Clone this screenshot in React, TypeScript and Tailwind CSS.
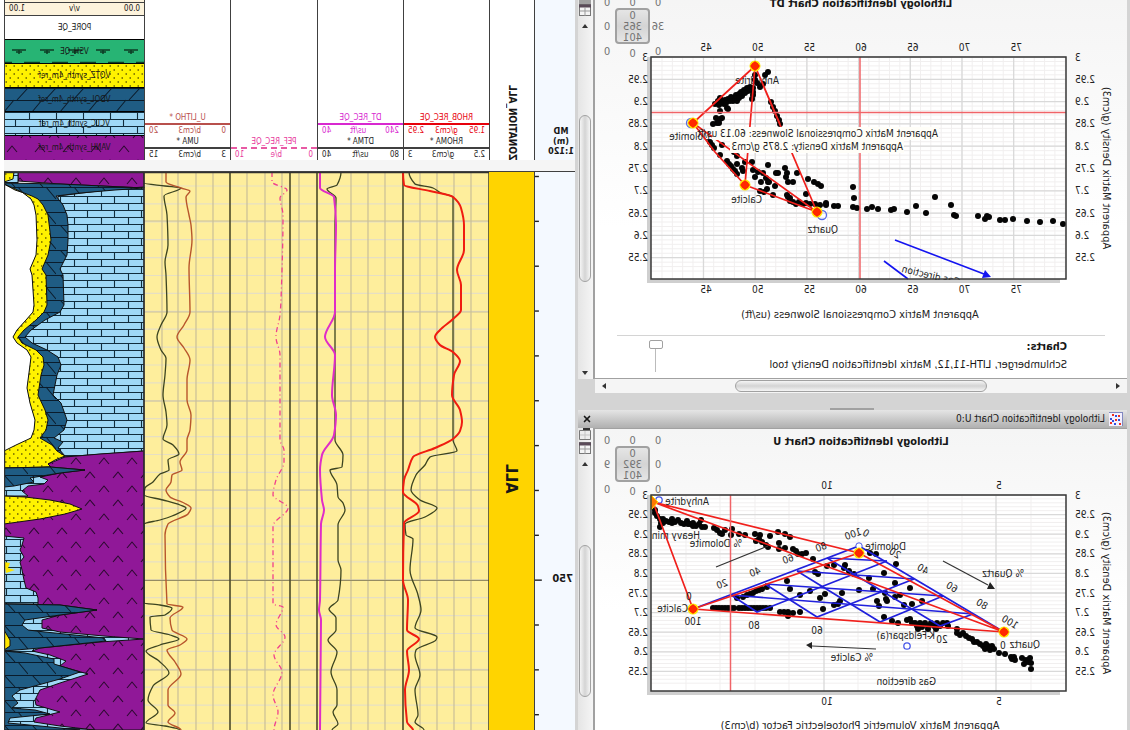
import React from 'react';
import { X } from 'lucide-react';

type Point = [number, number];

interface Scale {
  name: string;
  left: string;
  unit: string;
  right: string;
  text: string;
  line: string;
}

interface Track {
  id: string;
  scales: Scale[];
}

const tracks: Track[] = [
  {
    id: 'rho',
    scales: [
      { name: 'RHOB_REC_QE', left: '1.95', unit: 'g/cm3', right: '2.95', text: 'text-red-600', line: 'border-t-2 border-red-600' },
      { name: 'RHOMA *', left: '2.5', unit: 'g/cm3', right: '3', text: 'text-neutral-800', line: 'border-t-2 border-neutral-700' },
    ],
  },
  {
    id: 'dt',
    scales: [
      { name: 'DT_REC_QE', left: '240', unit: 'us/ft', right: '40', text: 'text-[#d828d0]', line: 'border-t-2 border-[#d828d0]' },
      { name: 'DTMA *', left: '80', unit: 'us/ft', right: '40', text: 'text-neutral-800', line: 'border-t-2 border-neutral-700' },
    ],
  },
  {
    id: 'pef',
    scales: [
      { name: 'PEF_REC_QE', left: '0', unit: 'b/e', right: '10', text: 'text-[#e83a9c]', line: 'border-t-2 border-dashed border-[#e85aa4]' },
    ],
  },
  {
    id: 'u',
    scales: [
      { name: 'U_LITHO *', left: '0', unit: 'b/cm3', right: '20', text: 'text-[#b8504c]', line: 'border-t-2 border-[#b8504c]' },
      { name: 'UMA *', left: '3', unit: 'b/cm3', right: '15', text: 'text-neutral-800', line: 'border-t-2 border-neutral-700' },
    ],
  },
];

const lithologies = [
  { name: 'PORE_QE', fill: '#ffffff' },
  { name: 'VSH_QE', fill: 'url(#shale)' },
  { name: 'VQTZ_synth_4m_ref', fill: 'url(#sand)' },
  { name: 'VDOL_synth_4m_ref', fill: 'url(#dolomite)' },
  { name: 'VCLC_synth_4m_ref', fill: 'url(#limestone)' },
  { name: 'VANH_synth_4m_ref', fill: 'url(#anhydrite)' },
];

const curves = [
  { color: '#3c4420', width: 1.3, points: '144,183 165,186 181,188 164,196 167,215 168,245 165,262 166,275 167,312 161,325 157,337 161,350 166,358 165,375 163,395 166,412 167,425 163,439 173,445 179,454 168,460 169,470 160,474 153,482 145,488 144,495 163,500 180,505 186,508 172,516 160,520 144,524 144,603 160,605 172,608 165,615 150,617 151,630 170,635 179,639 160,645 146,651 159,661 169,673 153,686 148,700 158,712 146,723 165,726 180,730' },
  { color: '#b8562c', width: 1.4, points: '166,172 166,182 181,188 190,191 186,197 189,215 191,225 192,240 189,268 190,312 184,325 177,337 184,348 190,360 187,380 187,400 191,415 190,430 187,440 187,450 180,462 182,470 172,475 171,482 166,490 170,497 184,503 191,508 188,514 168,524 165,535 167,604 183,607 170,618 172,630 187,639 180,645 167,650 175,662 181,674 168,690 168,705 175,713 168,722 181,730' },
  { color: '#f0408c', width: 1.3, dash: '5 3 1 3', points: '272,172 272,182 287,190 280,198 283,215 281,300 280,315 276,337 280,355 280,440 284,450 284,462 276,480 273,495 288,508 273,526 273,604 283,607 276,625 285,637 274,655 282,672 273,695 278,712 274,730' },
  { color: '#3c4420', width: 1.3, points: '341,172 337,185 327,189 336,198 335,225 335,440 343,455 342,467 330,470 337,485 338,497 343,503 345,510 338,525 338,560 341,570 338,600 329,609 336,618 336,630 328,640 337,652 331,672 337,690 337,705 333,712 338,724 332,730' },
  { color: '#e02cc8', width: 2, points: '320,172 320,188 334,197 336,225 335,270 335,312 325,337 335,355 332,395 336,415 334,435 322,455 320,470 322,500 324,510 321,524 320,600 319,610 321,620 320,730' },
  { color: '#3c4420', width: 1.3, points: '409,172 415,184 433,188 441,193 453,197 453,210 453,430 453,440 457,451 430,457 425,465 416,475 411,490 420,500 437,508 425,517 405,524 406,535 413,539 410,570 418,595 421,610 415,628 437,637 436,640 416,650 415,655 420,675 415,690 418,715 415,722 424,730' },
  { color: '#f01c10', width: 2, points: '403,172 404,185 430,191 453,197 461,208 464,225 464,250 457,270 461,285 461,310 453,319 440,330 435,337 440,345 453,352 460,361 454,375 452,395 460,410 462,422 460,431 453,439 435,448 413,457 408,470 404,480 403,492 418,506 419,511 404,523 403,580 408,600 407,630 419,639 407,651 409,670 405,690 407,722 413,730' },
];

const minorLines = Array.from({ length: 31 }, (_, i) => 186 + i * 17.9);
const majorLines = [221, 312, 401, 490, 580, 670];
const depthTicks = Array.from({ length: 13 }, (_, i) => i);

const toPoints = (s: string): Point[] =>
  s.split(' ').map((p) => p.split(',').map(Number) as Point);

// Cubic through every sample; handles lean on depth so the curve never runs backwards.
const smoothPath = (pts: Point[]) => {
  const slope = (i: number) => {
    const [x0, y0] = pts[Math.max(i - 1, 0)];
    const [x1, y1] = pts[i];
    const [x2, y2] = pts[Math.min(i + 1, pts.length - 1)];
    if ((x1 - x0) * (x2 - x1) <= 0) return 0;
    const a = (x1 - x0) / (y1 - y0);
    const b = (x2 - x1) / (y2 - y1);
    return (2 * a * b) / (a + b);
  };
  return pts.slice(1).reduce((d, [x, y], i) => {
    const [px, py] = pts[i];
    const h = (y - py) / 3;
    return `${d}C${px + slope(i) * h} ${py + h} ${x - slope(i + 1) * h} ${y - h} ${x} ${y}`;
  }, `M${pts[0][0]} ${pts[0][1]}`);
};

const slownessDots = toPoints(
  '768,72 765,75 755,75 755,80 763,84 760,87 753,88 750,87 747,88 744,90 741,92 739,94 736,95 734,98 731,97 728,99 725,100 722,101 718,101 715,104 720,98 733,101 737,101 742,96 748,91 719,105 724,104 730,101 745,93 739,98 753,92 753,95 752,99 757,83 720,111 727,108 726,103 728,109 716,118 717,123 713,124 720,119 719,123 722,118 771,102 773,107 775,111 777,116 779,120 780,124 ' +
  '710,142 712,145 714,148 720,155 727,161 729,164 731,166 733,169 735,171 737,174 722,145 734,152 737,156 737,164 743,171 742,168 745,162 752,162 753,170 755,177 758,172 763,173 766,178 768,182 761,182 769,182 767,189 773,195 775,186 768,165 776,173 778,173 785,168 787,173 786,177 788,182 793,182 797,173 808,179 814,182 818,184 821,186 806,194 790,198 787,195 ' +
  '760,191 764,192 788,197 790,201 793,202 796,204 799,202 803,204 806,203 810,204 815,204 818,206 820,205 826,203 826,205 834,206 838,206 853,187 854,198 853,207 857,208 867,209 872,207 878,209 891,210 894,209 907,212 916,206 926,213 935,197 951,205 954,215 956,216 978,216 985,219 987,216 989,217 1000,220 1005,220 1013,219 1027,221 1040,222 1053,221 1063,224'
);

const photoDots = toPoints(
  '655,509 655,512 657,515 660,518 661,522 660,526 663,518 663,522 666,520 669,521 672,518 672,522 675,521 678,519 681,522 684,523 687,520 690,523 693,522 696,525 699,523 702,526 701,519 705,526 693,525 688,523 714,527 717,529 720,532 722,533 725,529 731,534 732,528 739,533 745,534 755,533 756,540 760,534 759,538 762,541 766,544 770,535 768,546 778,531 779,542 785,533 790,536 779,548 785,547 793,548 796,550 798,553 802,553 806,552 813,558 ' +
  '827,565 834,564 845,564 844,567 849,570 854,573 818,573 815,571 787,580 790,588 800,594 810,590 820,597 825,593 823,608 834,604 838,603 842,592 840,600 737,597 743,596 747,594 750,593 753,592 756,590 759,589 762,588 767,586 ' +
  '713,607 716,607 719,607 722,607 725,607 728,607 731,607 734,607 739,607 742,607 745,607 748,607 751,607 754,607 757,607 760,607 763,607 766,607 770,607 780,611 784,611 788,611 788,615 793,612 800,611 ' +
  '870,552 876,553 896,563 884,572 895,582 910,587 869,577 873,588 859,589 877,600 879,605 887,600 895,596 900,594 904,604 912,603 922,600 885,592 886,598 884,616 892,620 898,622 907,619 910,618 912,622 915,622 917,625 920,622 922,626 925,622 928,625 931,622 934,625 937,622 940,625 943,622 948,625 918,628 928,628 936,628 947,622 ' +
  '957,628 957,632 960,634 963,632 966,635 969,637 972,638 974,641 977,641 980,643 983,645 985,648 988,645 990,649 992,645 994,648 986,643 999,652 1005,653 1011,656 1012,658 1014,656 1015,659 1022,657 1026,659 1030,657 1028,661 1024,663 1031,662 1031,668'
);

interface LabelProps {
  x: number;
  y: number;
  size?: number;
  anchor?: 'start' | 'middle' | 'end';
  angle?: number;
  children: React.ReactNode;
}

/** Text that starts (or is centred) on x and reads against the x direction of the plot. */
const Label: React.FC<LabelProps> = ({ x, y, size = 10, anchor = 'start', angle = 0, children }) => (
  <text
    transform={`translate(${x} ${y}) scale(-1 1) rotate(${angle})`}
    textAnchor={anchor}
    dominantBaseline="central"
    fontSize={size}
    fill="#222"
  >
    {children}
  </text>
);

const Dots: React.FC<{ points: Point[] }> = ({ points }) => (
  <g fill="#050505">
    {points.map(([x, y], i) => <circle key={i} cx={x} cy={y} r={3} />)}
  </g>
);

const Mineral: React.FC<{ x: number; y: number }> = ({ x, y }) => (
  <g>
    <circle cx={x} cy={y} r={5.5} fill="#ffe600" />
    <path d={`M${x - 5} ${y}l5 -5l5 5l-5 5z`} fill="#ff2800" />
    <circle cx={x} cy={y} r={3.8} fill="#ff2800" />
  </g>
);

const Patterns: React.FC = () => (
  <svg className="absolute size-0" aria-hidden="true">
    <defs>
      <pattern id="limestone" width="27" height="14" patternUnits="userSpaceOnUse">
        <rect width="27" height="14" fill="#9fd8f6" />
        <path d="M0 .5H27M0 7.5H27M6.5 0V7M20.5 7V14" stroke="#102c3c" strokeWidth="1.1" fill="none" />
      </pattern>
      <pattern id="dolomite" width="28" height="25" patternUnits="userSpaceOnUse">
        <rect width="28" height="25" fill="#1f5c84" />
        <path d="M0 .5H28M0 12.5H28M4 0L15 12M18 12L28 24" stroke="#0a1c2c" strokeWidth="1.1" fill="none" />
      </pattern>
      <pattern id="sand" width="8" height="8" patternUnits="userSpaceOnUse">
        <rect width="8" height="8" fill="#fff200" />
        <path d="M1 2h1.500M5 6h1.500" stroke="#6a6000" strokeWidth="1.3" />
      </pattern>
      <pattern id="anhydrite" width="28" height="28" patternUnits="userSpaceOnUse">
        <rect width="28" height="28" fill="#901898" />
        <path d="M15 16l5 -6l5 6M1 30l5 -6l5 6M1 2l5 -6l5 6" stroke="#2c0830" strokeWidth="1.1" fill="none" />
      </pattern>
      <pattern id="shale" width="28" height="24" patternUnits="userSpaceOnUse">
        <rect width="28" height="24" fill="#27b474" />
        <path d="M6 10h14M10 12h6M13 10v4M0 22.500h8M20 22.500h8" stroke="#0c3c24" strokeWidth="1.5" fill="none" />
      </pattern>
    </defs>
  </svg>
);

const TrackHeader: React.FC<{ track: Track }> = ({ track }) => (
  <div className="flex flex-col justify-end border-r border-neutral-700 text-[8px]/[11px]">
    {track.scales.map((s) => (
      <div key={s.name} className={s.text}>
        <div className="text-center">{s.name}</div>
        <div className={s.line}></div>
        <div className="flex justify-between px-1">
          <span>{s.left}</span>
          <span>{s.unit}</span>
          <span>{s.right}</span>
        </div>
      </div>
    ))}
  </div>
);

const LithologyHeader: React.FC = () => (
  <div className="flex flex-col justify-end overflow-hidden border-r border-neutral-700 text-[8px]/[12px]">
    <div className="border-b border-neutral-700 bg-[#fdf3dc] text-center">Combined Lithologies</div>
    <div className="flex justify-between border-b border-neutral-700 bg-[#fdf3dc] px-1">
      <span>0.00</span>
      <span>v/v</span>
      <span>1.00</span>
    </div>
    {lithologies.map((l) => (
      <div key={l.name} className="relative h-6 flex-none border-b border-black text-center leading-6 last:border-b-0">
        <svg className="absolute inset-0 size-full" aria-hidden="true">
          <rect width="100%" height="100%" fill={l.fill} />
        </svg>
        <span className="relative">{l.name}</span>
      </div>
    ))}
  </div>
);

const LogBody: React.FC = () => (
  <svg className="h-full w-full" viewBox="0 172 485 558" preserveAspectRatio="none">
    <g transform="translate(489 0) scale(-1 1)">
      <rect x="144" y="172" width="345" height="558" fill="#feee9c" />
      <g stroke="#e6dfc4" strokeWidth="1.2">
        {minorLines.map((y) => <path key={y} d={`M144 ${y}H489`} />)}
      </g>
      <g stroke="#c9bf98" strokeWidth="1.2">
        {majorLines.map((y) => <path key={y} d={`M144 ${y}H489`} />)}
        {[162, 178, 196, 213, 247, 265, 282, 299, 351, 368, 385, 420, 437, 454, 471].map((x) => (
          <path key={x} d={`M${x} 172V730`} />
        ))}
      </g>
      <path d="M144 580.500H489" stroke="#958c62" />
      <path d="M230 172V730M290 172V730M317 172V730M403 172V730M489 172V730" stroke="#4c4a28" strokeWidth="1.6" />
      {curves.map((c, i) => (
        <path key={i} d={smoothPath(toPoints(c.points))} fill="none" stroke={c.color} strokeWidth={c.width} strokeDasharray={c.dash} />
      ))}

      {/* Lithology column */}
      <rect x="4" y="172" width="140" height="558" fill="#fff" />
      <g stroke="#101010" strokeWidth="1">
        <path d="M18 172H144V188L60 184L18 181Z" fill="url(#anhydrite)" />
        <path d="M4 172H18V183H4Z" fill="url(#limestone)" />
        <path d="M4 172H14L13 179L4 182Z" fill="url(#sand)" />
        <path d="M115 189L144 187V451L62 457L40 445L20 350L20 320L58 310V196Z" fill="url(#limestone)" />
        <path d="M4 183L60 184L144 188L115 190L80 193L56 196L63 205L67 215L68 225L68 240L67 255L60 269L63 275L64 305L60 312L45 320L31 330L25 337L32 343L47 350L58 357L61 365L57 375L53 395L61 403L67 420L64 430L54 438L63 442L58 448L65 456L50 460L30 440L20 350L4 337L30 310L30 210Z" fill="url(#dolomite)" />
        <path d="M4 184L22 192L31 199L34 205L36 215L37 240L36 255L33 262L30 269L32 275L34 305L33 312L26 320L17 330L13 337L17 343L27 350L31 357L30 365L27 388L30 403L35 420L34 430L31 438L16 445L4 451Z" fill="#fff" stroke="none" />
        <path d="M4 184L15 190L24 193L32 196L38 199L43 205L48 215L51 240L48 255L42 269L46 275L47 305L44 312L36 320L24 330L18 337L22 343L36 350L43 357L44 365L41 375L38 395L45 410L48 420L46 430L40 438L52 445L57 451L65 456L55 460L48 464L52 467L4 469V451L16 445L31 438L34 430L35 420L30 403L27 388L30 365L31 357L27 350L17 343L13 337L17 330L26 320L33 312L34 305L32 275L30 269L33 262L36 255L37 240L36 215L34 205L31 199L22 192Z" fill="url(#sand)" />
        <path d="M144 451V730H4V468H52L48 464L65 457L100 454Z" fill="url(#anhydrite)" />
        <path d="M4 468L50 467L85 470L60 473L40 477L48 480L44 484L28 486L22 491L28 496L4 496Z" fill="url(#limestone)" />
        <path d="M4 468L50 467L85 470L60 473L30 478L34 482L14 486L4 487Z" fill="url(#dolomite)" />
        <path d="M4 496L25 497L50 500L70 504L82 509L65 514L40 519L4 524Z" fill="url(#sand)" />
        <path d="M4 536L24 538L22 545L20 550L24 557L20 562L22 570L24 580L26 588L36 592L38 598L38 604L4 604Z" fill="url(#limestone)" />
        <path d="M4 562L10 563L8 568L15 570L6 573Z" fill="#ffe600" stroke="none" />
        <path d="M4 604L60 605L97 610L60 615L42 620L42 628L60 632L104 636L144 639L100 642L40 648L32 651L50 655L66 661L60 666L88 674L60 683L40 690L35 700L36 705L60 712L36 718L34 722L60 726L94 730H4Z" fill="url(#limestone)" />
        <path d="M4 604L60 605L97 610L60 615L25 620L22 625L28 630L45 632L104 638L106 641L40 648L4 651Z" fill="url(#dolomite)" />
        <path d="M4 651L25 653L54 659L54 664L80 672L60 679L20 690L12 696L18 703L12 708L35 710L50 714L10 718L8 723L40 726L80 730H4Z" fill="url(#dolomite)" />
        <path d="M4 630L10 640L10 646L4 650Z" fill="#ffe600" />
      </g>
      <path d="M4.500 172V730M144 172V730M4 172.500H489" stroke="#303030" strokeWidth="1.4" />
    </g>
  </svg>
);

const LogView: React.FC = () => (
  <section className="flex min-w-0 flex-1 flex-col pr-1">
    <div className="grid h-40 flex-none grid-cols-[41fr_45fr_86fr_86fr_87fr_86fr_140fr] overflow-hidden bg-white">
      <div className="flex flex-col justify-end border-r border-neutral-700 bg-[#f4f9ff] pr-3 pb-1 text-center text-[9px]/[10px] font-bold">
        <div>MD</div>
        <div>(m)</div>
        <div>1:120</div>
      </div>
      <div className="flex items-end justify-center overflow-hidden border-r border-neutral-700">
        <span className="rotate-180 text-[10px] leading-4 font-bold whitespace-nowrap [writing-mode:vertical-rl]">ZONATION_ALL</span>
      </div>
      {tracks.map((t) => <TrackHeader key={t.id} track={t} />)}
      <LithologyHeader />
    </div>
    <div className="h-3 flex-none border-b border-neutral-700 bg-neutral-100"></div>
    <div className="grid min-h-0 flex-1 grid-cols-[41fr_45fr_485fr]">
      <div className="relative border-r border-neutral-700 bg-[#f4f9ff]">
        <svg className="size-full" viewBox="0 172 41 558" preserveAspectRatio="none" aria-hidden="true">
          {depthTicks.map((i) => (
            <path key={i} d={`M${i === 9 ? 34 : 37} ${176.5 + i * 44.85}h7`} stroke="#222" strokeWidth="1.4" />
          ))}
        </svg>
        <span className="absolute top-[73%] left-0.5 -translate-y-1/2 text-[11px] leading-3 font-bold">750</span>
      </div>
      <div className="flex items-center justify-center bg-[#ffd400] pt-14">
        <span className="rotate-180 text-base font-bold [writing-mode:vertical-rl]">ALL</span>
      </div>
      <div className="min-h-0 min-w-0"><LogBody /></div>
    </div>
  </section>
);

const Triangle: React.FC<{ down?: boolean }> = ({ down }) => (
  <svg viewBox="0 0 6 4" className="h-1 w-1.5 flex-none" aria-hidden="true">
    <path d={down ? 'M0 0H6L3 4Z' : 'M0 4H6L3 0Z'} fill="#333" />
  </svg>
);

const DockIcon: React.FC = () => (
  <svg viewBox="0 0 12 12" className="size-3 flex-none" aria-hidden="true">
    <rect x=".5" y=".5" width="11" height="11" fill="#f4f4f4" stroke="#777" />
    <path d="M0 2H12" stroke="#5a4a58" strokeWidth="3" />
    <path d="M6 3V12M1 7H11" stroke="#999" />
  </svg>
);

const FloatIcon: React.FC = () => (
  <svg viewBox="0 0 12 12" className="size-3 flex-none" aria-hidden="true">
    <path d="M.5 2.500H11.500V11.500H.5Z" fill="#ececec" stroke="#777" />
    <path d="M1 1H8" stroke="#333" strokeWidth="2" />
    <path d="M6 3V11M1 7H11" stroke="#c4c4c4" />
  </svg>
);

const SideBar: React.FC<{ thumb: React.ReactNode; end?: boolean; children: React.ReactNode }> = ({ thumb, end, children }) => (
  <div className="flex w-[17px] flex-none flex-col items-center overflow-hidden border-l-2 border-neutral-400 bg-linear-to-r from-neutral-100 to-neutral-200">
    {children}
    <div className="mt-2 flex"><Triangle /></div>
    <div className="flex w-full flex-1 flex-col items-center">{thumb}</div>
    {end && <div className="flex pb-1"><Triangle down /></div>}
  </div>
);

const gradientThumb = 'rounded-full border border-neutral-400 bg-linear-to-r from-neutral-100 via-neutral-300 to-neutral-100';

const Counter: React.FC<{ main: string[]; around: string[] }> = ({ main, around }) => (
  <div className="absolute top-1.5 right-1 grid grid-cols-[16px_35px_16px] items-center text-center text-[11px]/[11px] text-neutral-500">
    <span>{around[0]}</span>
    <span className="self-start">{around[1]}</span>
    <span>{around[2]}</span>
    <span>{around[3]}</span>
    <button type="button" className="flex h-[36px] flex-col items-center justify-center rounded border-2 border-neutral-400 bg-linear-to-b from-neutral-200 via-neutral-300 to-neutral-200">
      {main.map((m) => <span key={m}>{m}</span>)}
    </button>
    <span>{around[4]}</span>
    <span>{around[5]}</span>
    <span className="pt-1">{around[6]}</span>
    <span>{around[7]}</span>
  </div>
);

interface PlotFrameProps {
  top: number;
  bottom: number;
  step: number;
  xTicks: { x: number; label: string; at: number }[];
  minorX: number[];
  children: React.ReactNode;
}

const densities = ['3', '2.95', '2.9', '2.85', '2.8', '2.75', '2.7', '2.65', '2.6', '2.55'];

const PlotFrame: React.FC<PlotFrameProps> = ({ top, bottom, step, xTicks, minorX, children }) => {
  const minorY = Array.from({ length: Math.floor((bottom - top) / (step / 5)) }, (_, i) => top + (i * step) / 5);
  return (
    <>
      <path d={`M649 ${top}V${bottom + 2}H1060`} stroke="#cfcfcf" strokeWidth="4" fill="none" />
      <rect x="651" y={top} width="415" height={bottom - top} fill="#fff" />
      <g stroke="#f1efef">
        {minorY.map((y) => <path key={y} d={`M651 ${y}H1066`} />)}
        {minorX.map((x) => <path key={x} d={`M${x} ${top}V${bottom}`} />)}
      </g>
      <g stroke="#d9d9d9" strokeWidth="1.3">
        {densities.map((d, i) => <path key={d} d={`M651 ${top + i * step}H1066`} />)}
        {xTicks.map((t) => <path key={t.label} d={`M${t.x} ${top}V${bottom}`} />)}
      </g>
      {children}
      <rect x="651" y={top} width="415" height={bottom - top} fill="none" stroke="#383838" strokeWidth="1.5" />
      {densities.map((d, i) => (
        <g key={d}>
          <Label x={648} y={top + i * step}>{d}</Label>
          <Label x={1075} y={top + i * step} anchor="end">{d}</Label>
        </g>
      ))}
      {xTicks.map((t) => (
        <g key={t.label}>
          <Label x={t.at} y={top - 10} anchor="middle">{t.label}</Label>
          <Label x={t.at} y={bottom + 10} anchor="middle">{t.label}</Label>
        </g>
      ))}
      <Label x={1106} y={(top + bottom) / 2} size={11} anchor="middle" angle={-90}>Apparent Matrix Density (g/cm3)</Label>
    </>
  );
};

const slownessTicks = [45, 50, 55, 60, 65, 70, 75].map((v, i) => ({ x: 703.5 + i * 51.7, at: 706 + i * 51.7, label: String(v) }));

const SlownessChart: React.FC = () => (
  <svg className="block w-full" viewBox="0 17 532 310">
    <defs>
      <clipPath id="slowness-clip"><rect x="651" y="57" width="415" height="223" /></clipPath>
    </defs>
    <g transform="translate(1127 0) scale(-1 1)">
      <PlotFrame top={57} bottom={279} step={22.3} xTicks={slownessTicks} minorX={Array.from({ length: 40 }, (_, i) => 662 + i * 10.34)}>
        <Label x={779} y={80}>Anhydrite</Label>
        <Label x={710} y={136}>Dolomite</Label>
        <Dots points={slownessDots} />
        <g stroke="#f0201c" strokeWidth="1.7" fill="none">
          <path d="M755 66L693 123L817 212ZM755 66L745 185L817 212M693 123L715 152L745 185M755 66L780 124" />
          <path d="M651 112.500H1066M860 57V279" stroke="#f06468" strokeWidth="1.5" />
        </g>
        <rect x="712" y="127" width="227" height="13" fill="#fffef8" />
        <rect x="730" y="139" width="174" height="14" fill="#fffef8" />
        <Label x={938} y={133}>Apparent Matrix Compressional Slowness: 60.13 us/ft</Label>
        <Label x={903} y={146}>Apparent Matrix Density: 2.875 g/cm3</Label>
        <circle cx="822" cy="215" r="4.5" fill="none" stroke="#5468e8" strokeWidth="1.3" />
        <circle cx="691" cy="123" r="4.5" fill="none" stroke="#5468e8" strokeWidth="1.3" />
        <Mineral x={755} y={66} />
        <Mineral x={693} y={123} />
        <Mineral x={745} y={185} />
        <Mineral x={817} y={212} />
        <Label x={762} y={199}>Calcite</Label>
        <Label x={838} y={229}>Quartz</Label>
        <g clipPath="url(#slowness-clip)">
          <path d="M895 240L984 274M884 261L908 279" stroke="#1414f0" strokeWidth="1.6" fill="none" />
          <path d="M991 277L982 278L985 270Z" fill="#1414f0" />
          <Label x={960} y={282} angle={-13}>Gas direction</Label>
        </g>
      </PlotFrame>
      <Label x={860} y={314} size={11} anchor="middle">Apparent Matrix Compressional Slowness (us/ft)</Label>
    </g>
  </svg>
);

const photoTicks = [{ x: 824, at: 827, label: '10' }, { x: 996, at: 999, label: '5' }];

const percents = [
  ['20', 722, 583, 20], ['40', 755, 571, 20], ['60', 788, 558, 20], ['80', 821, 546, 20], ['100', 853, 533, 20],
  ['0', 866, 532, -30], ['20', 895, 552, -30], ['40', 923, 568, -30], ['60', 952, 586, -30], ['80', 982, 603, -30], ['100', 1010, 621, -30],
  ['0', 689, 595, 0], ['100', 693, 620, 0], ['80', 754, 624, 0], ['60', 817, 629, 0], ['20', 942, 638, 0], ['0', 1003, 644, 0],
] as const;

const PhotoelectricChart: React.FC = () => (
  <svg className="block w-full" viewBox="0 454 532 276">
    <g transform="translate(1127 0) scale(-1 1)">
      <PlotFrame top={494} bottom={690} step={19.6} xTicks={photoTicks} minorX={[686, 720, 755, 789, 858, 893, 928, 962, 1031]}>
        <Label x={700} y={534}>Heavy min</Label>
        <Label x={742} y={542}>% Dolomite</Label>
        <Dots points={photoDots} />
        <g stroke="#2020dc" strokeWidth="1.6" fill="none">
          <path d="M693 608L859 545L1004 631" />
          <path d="M827 557L887 560M797 570L914 578M765 583L943 595M731 594L973 613" />
          <path d="M731 594L757 611L887 560M765 583L817 616L914 578M797 570L880 621L943 595M827 557L940 625L973 613" />
        </g>
        <circle cx="859" cy="545" r="3.2" fill="#fff" stroke="#4858e8" />
        <circle cx="907" cy="645" r="3.2" fill="#fff" stroke="#4858e8" strokeWidth="1.3" />
        <circle cx="659" cy="499" r="3.2" fill="#fff" stroke="#4858e8" strokeWidth="1.3" />
        <path d="M653 501L859 552L1004 631ZM653 501L693 608L859 552M693 608L1004 631" stroke="#f0201c" strokeWidth="1.7" fill="none" />
        <path d="M730.500 494V690" stroke="#f06468" strokeWidth="1.5" />
        <g stroke="#333" strokeWidth="1.2">
          <path d="M716 566L768 545M943 560L988 584M876 648L812 645" />
          <path d="M995 588L987 588L990 581ZM806 644L812 641V648Z" fill="#222" stroke="none" />
        </g>
        <path d="M651 494L658 501L651 509Z" fill="#ff7800" stroke="#ffe600" />
        <Mineral x={693} y={608} />
        <Mineral x={859} y={552} />
        <Mineral x={1004} y={631} />
        {percents.map(([t, x, y, a]) => <Label key={`${x}-${y}`} x={x} y={y} angle={a} anchor="middle">{t}</Label>)}
        <Label x={709} y={500}>Anhydrite</Label>
        <Label x={688} y={607}>Calcite</Label>
        <Label x={906} y={545}>Dolomite</Label>
        <Label x={1024} y={572}>% Quartz</Label>
        <Label x={1040} y={643}>Quartz</Label>
        <Label x={935} y={634}>K-Feldspar(a)</Label>
        <Label x={873} y={656}>% Calcite</Label>
        <Label x={936} y={680}>Gas direction</Label>
      </PlotFrame>
      <Label x={860} y={724} size={11} anchor="middle">Apparent Matrix Volumetric Photoelectric Factor (b/cm3)</Label>
    </g>
  </svg>
);

const ChartTitle: React.FC<{ children: React.ReactNode }> = ({ children }) => (
  <h2 className="text-center text-[11px]/[26px] font-bold">{children}</h2>
);

const SlownessPanel: React.FC = () => (
  <section className="flex h-[393px] flex-none">
    <div className="flex min-w-0 flex-1 flex-col">
      <div className="min-h-0 flex-1 overflow-hidden border-b border-neutral-400 bg-linear-to-b from-neutral-100 to-white to-60%">
        <div className="relative -mt-[9px]">
          <ChartTitle>Lithology Identification Chart DT</ChartTitle>
          <Counter main={['0', '365', '401']} around={['0', '0', '0', '36', '0', '0', '0', '0']} />
          <SlownessChart />
          <div className="mx-[22px] mt-2 flex justify-between border-t border-neutral-300 pt-1">
            <div className="pl-[38px]">
              <h3 className="text-[11px]/[14px] font-bold">Charts:</h3>
              <p className="pt-1 text-[11px]/[14px]">Schlumberger, LITH-11,12, Matrix Identification Density tool</p>
            </div>
            <input
              type="range"
              defaultValue={0}
              aria-label="Chart overlay"
              className="mr-8 h-8 w-3.5 appearance-none bg-[linear-gradient(#bbb,#bbb)] bg-[length:1px_100%] bg-center bg-no-repeat [writing-mode:vertical-lr] [&::-webkit-slider-thumb]:h-[9px] [&::-webkit-slider-thumb]:w-3.5 [&::-webkit-slider-thumb]:appearance-none [&::-webkit-slider-thumb]:rounded-xs [&::-webkit-slider-thumb]:border [&::-webkit-slider-thumb]:border-neutral-400 [&::-webkit-slider-thumb]:bg-white"
            />
          </div>
        </div>
      </div>
      <div className="flex h-3.5 flex-none items-center justify-between bg-neutral-100 px-1.5">
        <span className="flex -rotate-90"><Triangle /></span>
        <div className="ml-[128px] h-3 w-[252px] rounded-full border border-neutral-400 bg-linear-to-b from-neutral-100 via-neutral-300 to-neutral-100"></div>
        <span className="ml-auto flex rotate-90"><Triangle /></span>
      </div>
    </div>
    <div className="flex pb-3.5">
      <SideBar end thumb={<div className={`mt-[87px] h-[167px] w-3 ${gradientThumb}`}></div>}>
        <div className="h-1 w-3 flex-none bg-neutral-400"></div>
        <DockIcon />
      </SideBar>
    </div>
  </section>
);

const PhotoelectricPanel: React.FC = () => (
  <section className="flex min-h-0 flex-1 flex-col">
    <div className="flex h-[18px] flex-none items-center bg-linear-to-b from-neutral-200 to-neutral-400/70 pr-1 pl-1">
      <svg viewBox="0 0 14 14" className="size-3.5 flex-none" aria-hidden="true">
        <rect width="14" height="14" fill="#f4f0ff" />
        <path d="M0 .5H14M.5 0V14" stroke="#8088c0" />
        <path d="M3 3h2v2h-2zM9 2h2v2h-2zM6 7h2v2h-2zM11 10h2v2h-2zM2 11h2v2h-2z" fill="#f03020" />
        <path d="M6 3h2v2h-2zM11 6h2v2h-2zM3 7h2v2h-2zM7 11h2v2h-2zM9 8h2v2h-2z" fill="#3050e0" />
      </svg>
      <span className="ml-1 flex-1 text-[10px]/[14px]">Lithology Identification Chart U:0</span>
      <button type="button" aria-label="Close" className="flex"><X size={10} strokeWidth={4} /></button>
    </div>
    <div className="flex min-h-0 flex-1">
      <div className="relative min-w-0 flex-1 overflow-hidden border-t border-neutral-400 bg-linear-to-b from-neutral-100 to-white to-60%">
        <ChartTitle>Lithology Identification Chart U</ChartTitle>
        <Counter main={['0', '392', '401']} around={['0', '0', '0', '0', '9', '0', '0', '0']} />
        <PhotoelectricChart />
      </div>
      <SideBar thumb={<div className={`mt-[79px] h-[152px] w-3 ${gradientThumb}`}></div>}>
        <FloatIcon />
        <div className="mt-0.5 flex"><DockIcon /></div>
      </SideBar>
    </div>
  </section>
);

const App: React.FC = () => (
  <main className="relative flex h-screen -scale-x-100 overflow-hidden bg-white font-['DejaVu_Sans_Condensed','DejaVu_Sans',sans-serif] text-neutral-900">
    <Patterns />
    <div className="flex w-[552px] flex-none flex-col border-l-[3px] border-neutral-300 bg-neutral-300">
      <SlownessPanel />
      <div className="flex h-[17px] flex-none items-end justify-center">
        <div className="h-0.5 w-11 bg-neutral-400"></div>
      </div>
      <PhotoelectricPanel />
    </div>
    <div className="w-[3px] flex-none bg-neutral-300"></div>
    <LogView />
  </main>
);

export default App;
